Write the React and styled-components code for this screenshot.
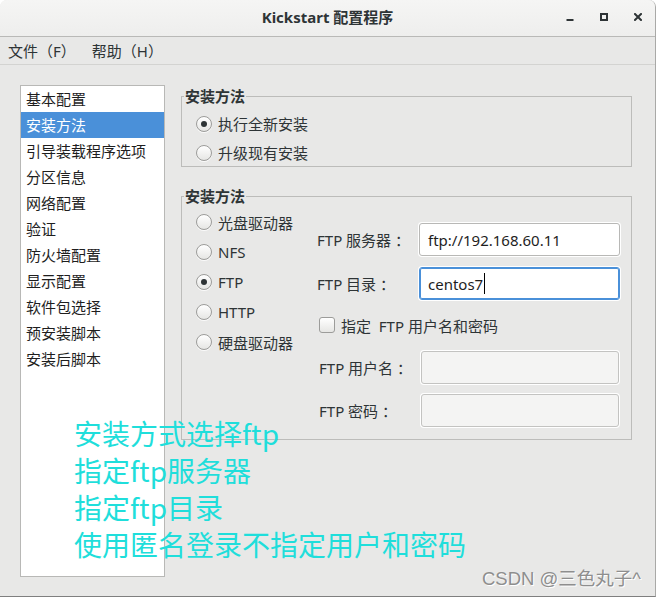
import React from "react";
import styled, { createGlobalStyle, css } from "styled-components";

const GlobalStyle = createGlobalStyle`
  html, body { margin: 0; padding: 0; background: #ffffff; }
  body { font-family: "Noto Sans", "Noto Sans CJK SC", sans-serif; }
  * { box-sizing: border-box; }
`;

const Window = styled.div`
  position: relative;
  width: 656px;
  height: 597px;
  background: #e8e8e7;
  border-right: 1px solid #a9a9a7;
  border-bottom: 1px solid #7f7f7f;
  border-radius: 7px 7px 0 0;
  overflow: hidden;
  display: flex;
  flex-direction: column;
  color: #2e3436;
  font-size: 15px;
`;

const TitleBar = styled.div`
  height: 37px;
  flex: 0 0 37px;
  display: grid;
  grid-template-columns: 1fr auto 1fr;
  align-items: center;
  background: linear-gradient(#f5f5f4, #eeeeed);
  border-bottom: 1px solid #b9b9b7;
`;

const Title = styled.div`
  grid-column: 2;
  font-weight: 700;
  font-size: 15px;
  color: #2e3436;
  line-height: 20px;
  padding-bottom: 2px;
`;

const Controls = styled.div`
  grid-column: 3;
  justify-self: end;
  display: flex;
  height: 100%;
`;

const ControlButton = styled.div`
  width: 34px;
  display: flex;
  align-items: center;
  justify-content: center;
  padding-bottom: 2px;
`;

const MenuBar = styled.div`
  height: 28px;
  flex: 0 0 28px;
  display: flex;
  align-items: center;
  border-bottom: 1px solid #d3d3d1;
`;

const MenuItem = styled.div`
  padding: 0 8px;
  font-size: 15px;
  line-height: 20px;
  color: #2e3436;
`;

const Body = styled.div`
  flex: 1;
  display: flex;
  gap: 16px;
  padding: 20px 0 0 20px;
`;

const NavList = styled.div`
  width: 145px;
  height: 492px;
  background: #ffffff;
  border: 1px solid #b8b8b6;
  display: flex;
  flex-direction: column;
`;

const NavItem = styled.div`
  height: 26px;
  line-height: 26px;
  padding-left: 5px;
  font-size: 15px;
  color: #1e1e1e;
  ${(p) =>
    p.$selected &&
    css`
      background: #4a90d9;
      color: #ffffff;
    `}
`;

const RightColumn = styled.div`
  width: 451px;
  display: flex;
  flex-direction: column;
  gap: 18px;
`;

const Group = styled.fieldset`
  margin: 0;
  padding: 0;
  border: 1px solid #bcbcba;
  min-inline-size: 0;
`;

const Legend = styled.legend`
  font-weight: 700;
  font-size: 15px;
  line-height: 22px;
  padding: 0 1px;
  margin-left: 2px;
  color: #2e3436;
`;

const RadioStack = styled.div`
  display: flex;
  flex-direction: column;
  gap: ${(p) => p.$gap || 0}px;
  padding-top: ${(p) => p.$pt || 0}px;
  padding-left: ${(p) => p.$pl || 0}px;
`;

const RadioRow = styled.div`
  height: ${(p) => p.$h}px;
  display: flex;
  align-items: center;
  gap: 6px;
  font-size: 15px;
  color: #2e3436;
`;

const RadioCircle = styled.span`
  width: 16px;
  height: 16px;
  flex: 0 0 16px;
  border-radius: 50%;
  border: 1px solid #9c9c9a;
  background: linear-gradient(#ffffff, #e6e6e4);
  box-shadow: 0 1px 0 rgba(255, 255, 255, 0.8);
  display: flex;
  align-items: center;
  justify-content: center;
  &::after {
    content: "";
    width: 6px;
    height: 6px;
    border-radius: 50%;
    background: #2e3436;
    display: ${(p) => (p.$checked ? "block" : "none")};
  }
`;

const InstallBody = styled.div`
  display: flex;
  padding: 0 0 11px 14px;
`;

const RadioCol = styled.div`
  width: 121px;
  flex: 0 0 121px;
`;

const FormCol = styled.div`
  display: flex;
  flex-direction: column;
  padding-top: 15px;
`;

const FormGrid = styled.div`
  display: grid;
  grid-template-columns: 101px ${(p) => p.$inputW}px;
  row-gap: ${(p) => p.$gap}px;
  align-items: center;
  margin-left: ${(p) => p.$ml || 0}px;
`;

const Label = styled.div`
  font-size: 15px;
  color: #2e3436;
  white-space: pre;
`;

const Colon = styled.span`
  padding-left: 4px;
`;

const Field = styled.div`
  margin: 1px;
  height: 33px;
  border: 1px solid #b8b8b6;
  border-radius: 3px;
  background: #ffffff;
  box-shadow: 0 0 0 1px #ffffff;
  display: flex;
  align-items: center;
  padding-left: 8px;
  font-size: 15px;
  color: #1e1e1e;
  ${(p) =>
    p.$focused &&
    css`
      border-color: #4a90d9;
      box-shadow: inset 0 0 0 1px #4a90d9, 0 0 0 1px #ffffff;
    `}
  ${(p) =>
    p.$disabled &&
    css`
      background: #f4f4f3;
      border-color: #c3c3c1;
    `}
`;

const Caret = styled.span`
  width: 1px;
  height: 21px;
  background: #000;
  margin-left: 1px;
`;

const CheckRow = styled.div`
  display: flex;
  align-items: center;
  gap: 6px;
  height: 16px;
  margin: 16px 0 17px 2px;
  font-size: 15px;
  color: #2e3436;
  white-space: pre;
`;

const CheckBox = styled.span`
  width: 16px;
  height: 16px;
  flex: 0 0 16px;
  border: 1px solid #9c9c9a;
  border-radius: 3px;
  background: linear-gradient(#ffffff, #e6e6e4);
`;

const Annotation = styled.div`
  position: absolute;
  left: 74px;
  top: 415px;
  font-family: "Noto Sans CJK SC", sans-serif;
  font-size: 28px;
  line-height: 37px;
  color: #1fdedb;
`;

const Watermark = styled.div`
  position: absolute;
  right: 14px;
  top: 567px;
  font-family: "Liberation Sans", "Noto Sans CJK SC", sans-serif;
  font-size: 18.5px;
  line-height: 24px;
  color: #8e8e8e;
  text-shadow: 1px 1px 0 #ffffff;
`;

const navItems = [
  "基本配置",
  "安装方法",
  "引导装载程序选项",
  "分区信息",
  "网络配置",
  "验证",
  "防火墙配置",
  "显示配置",
  "软件包选择",
  "预安装脚本",
  "安装后脚本",
];

const sources = [
  { label: "光盘驱动器" },
  { label: "NFS" },
  { label: "FTP", checked: true },
  { label: "HTTP" },
  { label: "硬盘驱动器" },
];

function Icon({ type }) {
  if (type === "min")
    return (
      <svg width="8" height="8" viewBox="0 0 8 8">
        <rect x="0.5" y="6" width="7" height="2" fill="#2e3436" />
      </svg>
    );
  if (type === "max")
    return (
      <svg width="8" height="8" viewBox="0 0 8 8">
        <rect x="1" y="1" width="6" height="6" fill="none" stroke="#2e3436" strokeWidth="2" />
      </svg>
    );
  return (
    <svg width="8" height="8" viewBox="0 0 8 8">
      <path d="M1 1 L7 7 M7 1 L1 7" stroke="#2e3436" strokeWidth="2" strokeLinecap="square" />
    </svg>
  );
}

function FormLabel({ children }) {
  return (
    <Label>
      {children}
      <Colon>：</Colon>
    </Label>
  );
}

export default function App() {
  return (
    <>
      <GlobalStyle />
      <Window>
        <TitleBar>
          <Title>Kickstart 配置程序</Title>
          <Controls>
            <ControlButton><Icon type="min" /></ControlButton>
            <ControlButton><Icon type="max" /></ControlButton>
            <ControlButton><Icon type="close" /></ControlButton>
          </Controls>
        </TitleBar>
        <MenuBar>
          <MenuItem>文件（F）</MenuItem>
          <MenuItem>帮助（H）</MenuItem>
        </MenuBar>
        <Body>
          <NavList>
            {navItems.map((item, i) => (
              <NavItem key={item} $selected={i === 1}>
                {item}
              </NavItem>
            ))}
          </NavList>
          <RightColumn>
            <Group>
              <Legend>安装方法</Legend>
              <RadioStack $gap={2} $pt={3} $pl={14}>
                <RadioRow $h={27}>
                  <RadioCircle $checked />
                  执行全新安装
                </RadioRow>
                <RadioRow $h={27}>
                  <RadioCircle />
                  升级现有安装
                </RadioRow>
              </RadioStack>
            </Group>
            <Group>
              <Legend>安装方法</Legend>
              <InstallBody>
                <RadioCol>
                  <RadioStack>
                    {sources.map((s) => (
                      <RadioRow key={s.label} $h={30}>
                        <RadioCircle $checked={s.checked} />
                        {s.label}
                      </RadioRow>
                    ))}
                  </RadioStack>
                </RadioCol>
                <FormCol>
                  <FormGrid $inputW={203} $gap={9}>
                    <FormLabel>FTP 服务器</FormLabel>
                    <Field>ftp://192.168.60.11</Field>
                    <FormLabel>FTP 目录</FormLabel>
                    <Field $focused>
                      centos7
                      <Caret />
                    </Field>
                  </FormGrid>
                  <CheckRow>
                    <CheckBox />
                    指定  FTP 用户名和密码
                  </CheckRow>
                  <FormGrid $inputW={200} $gap={8} $ml={2}>
                    <FormLabel>FTP 用户名</FormLabel>
                    <Field $disabled />
                    <FormLabel>FTP 密码</FormLabel>
                    <Field $disabled />
                  </FormGrid>
                </FormCol>
              </InstallBody>
            </Group>
          </RightColumn>
        </Body>
        <Annotation>
          <div>安装方式选择ftp</div>
          <div>指定ftp服务器</div>
          <div>指定ftp目录</div>
          <div>使用匿名登录不指定用户和密码</div>
        </Annotation>
        <Watermark>CSDN @三色丸子^</Watermark>
      </Window>
    </>
  );
}
